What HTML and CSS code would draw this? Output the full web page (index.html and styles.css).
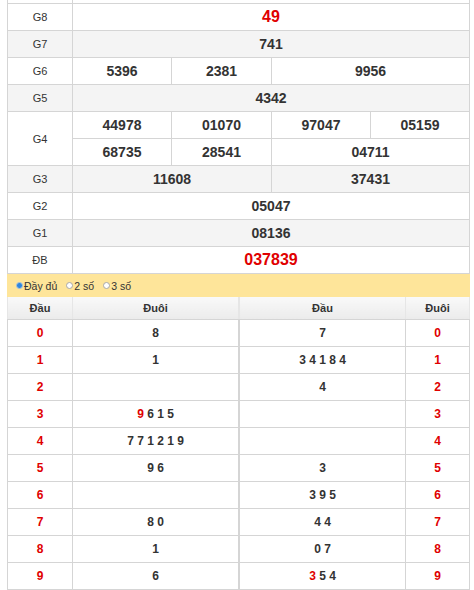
FILE: index.html
```html
<!DOCTYPE html>
<html lang="vi">
<head>
<meta charset="utf-8">
<title>Kết quả xổ số</title>
<link rel="stylesheet" href="styles.css">
</head>
<body>
<div class="page">
  <table class="kq">
    <colgroup>
      <col class="c-lbl"><col class="c-a"><col class="c-b"><col class="c-c"><col class="c-d">
    </colgroup>
    <tbody>
      <tr class="cut"><td class="lbl"></td><td colspan="4"></td></tr>
      <tr><td class="lbl">G8</td><td colspan="4" class="big red">49</td></tr>
      <tr class="alt"><td class="lbl">G7</td><td colspan="4">741</td></tr>
      <tr><td class="lbl">G6</td><td>5396</td><td>2381</td><td colspan="2">9956</td></tr>
      <tr class="alt"><td class="lbl">G5</td><td colspan="4">4342</td></tr>
      <tr><td class="lbl" rowspan="2">G4</td><td>44978</td><td>01070</td><td>97047</td><td>05159</td></tr>
      <tr><td>68735</td><td>28541</td><td colspan="2">04711</td></tr>
      <tr class="alt"><td class="lbl">G3</td><td colspan="2">11608</td><td colspan="2">37431</td></tr>
      <tr><td class="lbl">G2</td><td colspan="4">05047</td></tr>
      <tr class="alt"><td class="lbl">G1</td><td colspan="4">08136</td></tr>
      <tr><td class="lbl">ĐB</td><td colspan="4" class="big red">037839</td></tr>
    </tbody>
  </table>

  <div class="opts">
    <label class="opt"><span class="radio on"></span>Đầy đủ</label>
    <label class="opt"><span class="radio"></span>2 số</label>
    <label class="opt"><span class="radio"></span>3 số</label>
  </div>

  <div class="loto">
    <table class="lt lt-left">
      <colgroup><col class="l-head"><col class="l-tail"></colgroup>
      <thead><tr><th>Đầu</th><th>Đuôi</th></tr></thead>
      <tbody>
        <tr><td class="red">0</td><td>8</td></tr>
        <tr><td class="red">1</td><td>1</td></tr>
        <tr><td class="red">2</td><td></td></tr>
        <tr><td class="red">3</td><td><span class="red">9</span> 6 1 5</td></tr>
        <tr><td class="red">4</td><td>7 7 1 2 1 9</td></tr>
        <tr><td class="red">5</td><td>9 6</td></tr>
        <tr><td class="red">6</td><td></td></tr>
        <tr><td class="red">7</td><td>8 0</td></tr>
        <tr><td class="red">8</td><td>1</td></tr>
        <tr><td class="red">9</td><td>6</td></tr>
      </tbody>
    </table>
    <table class="lt lt-right">
      <colgroup><col class="r-head"><col class="r-tail"></colgroup>
      <thead><tr><th>Đầu</th><th>Đuôi</th></tr></thead>
      <tbody>
        <tr><td>7</td><td class="red">0</td></tr>
        <tr><td>3 4 1 8 4</td><td class="red">1</td></tr>
        <tr><td>4</td><td class="red">2</td></tr>
        <tr><td></td><td class="red">3</td></tr>
        <tr><td></td><td class="red">4</td></tr>
        <tr><td>3</td><td class="red">5</td></tr>
        <tr><td>3 9 5</td><td class="red">6</td></tr>
        <tr><td>4 4</td><td class="red">7</td></tr>
        <tr><td>0 7</td><td class="red">8</td></tr>
        <tr><td><span class="red">3</span> 5 4</td><td class="red">9</td></tr>
      </tbody>
    </table>
  </div>
</div>
</body>
</html>
```

FILE: styles.css
```css
html, body {
  margin: 0;
  padding: 0;
  background: #fff;
}

body {
  font-family: "Liberation Sans", Arial, sans-serif;
  color: #333;
}

.page {
  width: 463px;
  margin: -24px 0 0 7px;
}

table {
  border-collapse: collapse;
  table-layout: fixed;
}

/* results table */
.kq {
  width: 463px;
}

.kq .c-lbl { width: 65px; }
.kq .c-a { width: 99px; }
.kq .c-b { width: 100px; }
.kq .c-c { width: 99px; }
.kq .c-d { width: 99px; }

.kq td {
  border: 1px solid #d5d5d5;
  height: 26px;
  padding: 0;
  text-align: center;
  vertical-align: middle;
  font-size: 14px;
  font-weight: bold;
  line-height: 16px;
  color: #333;
}

.kq td.lbl {
  font-size: 11px;
  font-weight: normal;
}

.kq tr.alt td {
  background: #f4f4f4;
}

.kq td.big {
  font-size: 16px;
}

.red,
.kq td.red,
.lt td.red {
  color: #e00000;
}

/* options bar */
.opts {
  display: flex;
  align-items: center;
  gap: 9px;
  height: 23px;
  padding-left: 9px;
  background: #fee59a;
  font-size: 10.5px;
  color: #333;
}

.opt {
  display: flex;
  align-items: center;
  gap: 1px;
}

.radio {
  width: 7px;
  height: 7px;
  border-radius: 50%;
  border: 1px solid #a8a8a8;
  background: #fff;
  box-sizing: border-box;
}

.radio.on {
  border: 1px solid #8fb6e0;
  background: radial-gradient(circle, #2f86dd 0 2.2px, #8fbbe6 2.6px);
}

/* loto tables */
.loto {
  display: flex;
}

.lt-left { width: 232px; }
.lt-right { width: 231px; }

.l-head { width: 65px; }
.l-tail { width: 166px; }
.r-head { width: 166px; }
.r-tail { width: 64px; }

.lt th {
  height: 22px;
  padding: 0;
  font-size: 11px;
  font-weight: bold;
  color: #333;
  text-align: center;
  vertical-align: middle;
  background: linear-gradient(#f9f9f9, #ebebeb);
  border-bottom: 1px solid #d5d5d5;
  border-left: 1px solid #e6e6e6;
  border-right: 1px solid #e6e6e6;
}

.lt td {
  border: 1px solid #d5d5d5;
  height: 26px;
  padding: 0;
  text-align: center;
  vertical-align: middle;
  font-size: 12px;
  font-weight: bold;
  color: #333;
}
```
